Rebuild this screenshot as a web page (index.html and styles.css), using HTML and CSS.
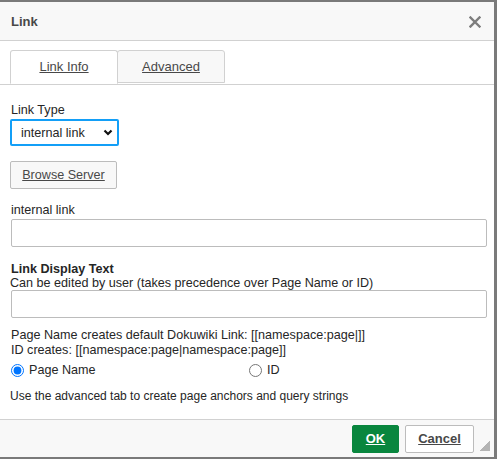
FILE: index.html
```html
<!DOCTYPE html>
<html lang="en">
<head>
    <meta charset="UTF-8">
    <meta name="viewport" content="width=device-width, initial-scale=1.0">
    <title>Link</title>
    <link rel="stylesheet" href="styles.css">
</head>
<body>
    <div class="dialog">
        <!-- Title bar -->
        <div class="dialog-title">
            <span>Link</span>
            <a href="#" class="dialog-close" title="Close">
                <svg width="12" height="12" viewBox="0 0 12 12">
                    <path d="M1.5 1.5 L10.5 10.5 M10.5 1.5 L1.5 10.5" stroke="#7d7d7d" stroke-width="2.4" stroke-linecap="square"/>
                </svg>
            </a>
        </div>

        <!-- Tabs -->
        <div class="dialog-tabs">
            <a href="#" class="tab active">Link Info</a>
            <a href="#" class="tab">Advanced</a>
        </div>

        <div class="dialog-contents">
            <label class="field-label" for="link-type">Link Type</label>
            <div class="select-wrap">
                <select id="link-type" class="select">
                    <option>internal link</option>
                    <option>URL</option>
                    <option>Link to anchor in the text</option>
                    <option>E-mail</option>
                </select>
                <svg class="chevron" width="10" height="7" viewBox="0 0 10 7">
                    <path d="M1.5 1.5 L5 5 L8.5 1.5" stroke="#111" stroke-width="2.2" fill="none"/>
                </svg>
            </div>

            <a href="#" class="btn-browse">Browse Server</a>

            <label class="field-label" for="internal-link">internal link</label>
            <input type="text" id="internal-link" class="text-input">

            <div class="display-text">
                <div class="field-title">Link Display Text</div>
                <label for="display-text">Can be edited by user (takes precedence over Page Name or ID)</label>
            </div>
            <input type="text" id="display-text" class="text-input">

            <p class="help">
                Page Name creates default Dokuwiki Link: [[namespace:page|]]<br>
                ID creates: [[namespace:page|namespace:page]]
            </p>

            <div class="radio-row">
                <label class="radio"><input type="radio" name="link-name" checked> Page Name</label>
                <label class="radio"><input type="radio" name="link-name"> ID</label>
            </div>

            <p class="note">Use the advanced tab to create page anchors and query strings</p>
        </div>

        <!-- Footer buttons -->
        <div class="dialog-footer">
            <a href="#" class="btn btn-ok">OK</a>
            <a href="#" class="btn btn-cancel">Cancel</a>
            <span class="resizer"></span>
        </div>
    </div>
</body>
</html>
```

FILE: styles.css
```css
body {
    margin: 0;
    padding: 0;
    font-family: "Liberation Sans", Arial, sans-serif;
    font-size: 13px;
    color: #262626;
    background-color: #7a7a7a;
}

.dialog {
    box-sizing: border-box;
    width: 497px;
    height: 459px;
    border-top: 2px solid #7a7a7a;
    border-right: 3px solid #7a7a7a;
    border-bottom: 2px solid #7a7a7a;
    background-color: #fff;
    display: flex;
    flex-direction: column;
}

.dialog-title {
    flex: 0 0 38px;
    background-color: #f8f8f8;
    border-bottom: 1px solid #d1d1d1;
    display: flex;
    align-items: center;
    justify-content: space-between;
    padding: 0 13px 0 11px;
    font-weight: bold;
    color: #484848;
}

.dialog-close {
    display: flex;
    margin-top: 2px;
}

.dialog-tabs {
    display: flex;
    padding: 9px 0 0 10px;
    border-bottom: 1px solid #d1d1d1;
    flex: 0 0 32px;
}

.tab {
    box-sizing: border-box;
    width: 108px;
    height: 33px;
    border: 1px solid #d1d1d1;
    border-radius: 3px 3px 0 0;
    background-color: #f8f8f8;
    color: #484848;
    text-align: center;
    line-height: 32px;
    margin-left: -1px;
}

.tab:first-child {
    margin-left: 0;
}

.tab.active {
    background-color: #fff;
    border-bottom-color: #fff;
    height: 34px;
}

.dialog-contents {
    flex: 1;
    min-height: 0;
    padding: 17px 8px 0 10px;
    font-size: 12.6px;
}

.field-label {
    display: block;
    line-height: 16px;
    margin-left: 1px;
}

.select-wrap {
    position: relative;
    width: 109px;
    margin-top: 1px;
}

.select {
    box-sizing: border-box;
    width: 109px;
    height: 27px;
    border: 2px solid #139ff7;
    border-radius: 2px;
    background-color: #fff;
    font-family: inherit;
    font-size: 12.6px;
    color: #262626;
    padding: 0 0 0 9px;
    appearance: none;
    outline: none;
}

.chevron {
    position: absolute;
    right: 6px;
    top: 10px;
    pointer-events: none;
}

.btn-browse {
    display: inline-block;
    box-sizing: border-box;
    height: 28px;
    width: 107px;
    margin-top: 15px;
    border: 1px solid #bcbcbc;
    border-radius: 2px;
    background-color: #f8f8f8;
    color: #484848;
    text-align: center;
    line-height: 26px;
}

.btn-browse + .field-label {
    margin-top: 13px;
}

.text-input {
    display: block;
    box-sizing: border-box;
    width: 476px;
    height: 28px;
    margin: 1px 0 0 1px;
    border: 1px solid #bcbcbc;
    border-radius: 2px;
    padding: 0 8px;
    outline: none;
}

.display-text {
    margin-top: 15px;
    line-height: 14px;
}

.field-title {
    font-weight: bold;
    margin-left: 1px;
}

.display-text + .text-input {
    margin-top: 0;
}

.help {
    margin: 10px 0 0 1px;
    line-height: 15px;
}

.radio-row {
    display: flex;
    margin-top: 4px;
}

.radio {
    flex: 0 0 238px;
    display: flex;
    align-items: center;
    line-height: 16px;
}

.radio input {
    margin: 0 5px 0 1px;
    width: 13px;
    height: 13px;
}

.note {
    margin: 11px 0 0 0;
    font-size: 12px;
    line-height: 15px;
}

/* footer: buttons sit right, resize grip in the corner */
.dialog-footer {
    flex: 0 0 37px;
    background-color: #f8f8f8;
    border-top: 1px solid #d1d1d1;
    display: flex;
    justify-content: flex-end;
    align-items: center;
    padding-right: 4px;
}

.btn {
    box-sizing: border-box;
    height: 28px;
    line-height: 26px;
    border-radius: 2px;
    font-weight: bold;
    text-align: center;
    margin-top: 1px;
}

.btn-ok {
    width: 47px;
    background-color: #09863e;
    border: 1px solid #09863e;
    color: #fff;
}

.btn-cancel {
    width: 69px;
    margin-left: 6px;
    background-color: #fff;
    border: 1px solid #bcbcbc;
    color: #484848;
}

.resizer {
    display: block;
    flex: 0 0 10px;
    width: 10px;
    height: 10px;
    align-self: flex-end;
    margin: 0 0 6px 6px;
    background: linear-gradient(135deg, transparent 50%, #b4b4b4 50%);
}
```
